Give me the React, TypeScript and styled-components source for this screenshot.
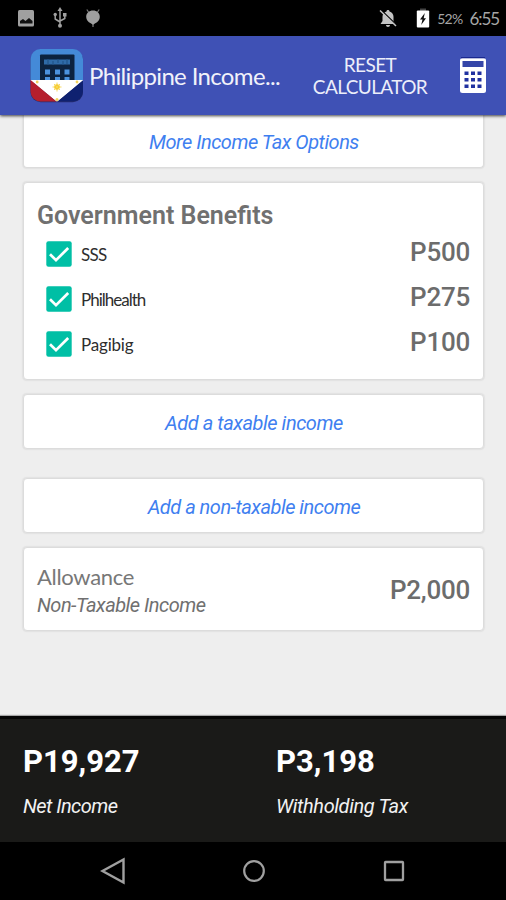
import React from "react";
import styled, { createGlobalStyle } from "styled-components";

const Global = createGlobalStyle`
  * { box-sizing: border-box; }
  html, body { margin: 0; padding: 0; }
  body { font-family: Roboto, "Noto Sans", sans-serif; background: #eeeeee; }
`;

const rounded = `Lato, "Open Sans", sans-serif`;

const Screen = styled.div`
  width: 506px;
  height: 900px;
  display: flex;
  flex-direction: column;
  overflow: hidden;
  background: #eeeeee;
`;

const StatusBar = styled.div`
  height: 36px;
  flex: none;
  background: #000;
  display: flex;
  align-items: center;
  justify-content: space-between;
  padding: 0 7px 0 17px;
  svg { display: block; }
`;

const StatusGroup = styled.div<{ $gap: number }>`
  display: flex;
  align-items: center;
  gap: ${(p) => p.$gap}px;
`;

const StatusText = styled.span<{ $size: number; $spacing: number }>`
  font-family: ${rounded};
  font-size: ${(p) => p.$size}px;
  letter-spacing: ${(p) => p.$spacing}px;
  line-height: 36px;
  color: #a6a6a6;
  padding-top: 2px;
`;

const AppBar = styled.header`
  height: 79px;
  flex: none;
  background: #3f51b5;
  box-shadow: 0 1px 3px rgba(0, 0, 0, 0.75);
  display: flex;
  align-items: center;
  padding: 0 19px 0 30px;
  z-index: 1;
  svg { display: block; flex: none; }
`;

const AppTitle = styled.h1`
  margin: 0 0 0 5px;
  width: 218px;
  font-family: ${rounded};
  font-weight: 400;
  font-size: 24px;
  letter-spacing: -0.65px;
  line-height: 30px;
  color: #f1f2fa;
  white-space: nowrap;
`;

const ResetButton = styled.button`
  width: 126px;
  margin-right: 26px;
  padding: 0;
  border: 0;
  background: none;
  font-family: ${rounded};
  font-size: 19px;
  line-height: 22px;
  letter-spacing: -0.6px;
  color: #eceefa;
  text-align: center;
`;

const Content = styled.main`
  height: 601px;
  flex: none;
  overflow: hidden;
  padding: 0 22px 0 23px;
  display: flex;
  flex-direction: column;
`;

const Card = styled.section<{ $height: number; $gap: number }>`
  height: ${(p) => p.$height}px;
  margin-bottom: ${(p) => p.$gap}px;
  flex: none;
  background: #fff;
  border: 1px solid #dcdcdc;
  box-shadow: 0 0 1px 0.5px #e2e2e2;
  border-radius: 4px;
  padding: 0 13px;
`;

const FirstCard = styled(Card)`
  border-top: 0;
  border-radius: 0 0 4px 4px;
`;

const LinkLabel = styled.a<{ $line: number; $spacing: number }>`
  display: block;
  text-align: center;
  font-style: italic;
  font-size: 20px;
  line-height: ${(p) => p.$line}px;
  letter-spacing: ${(p) => p.$spacing}px;
  padding-left: 1px;
  color: #3f7ff0;
  white-space: nowrap;
`;

const Heading = styled.h2`
  margin: 0;
  padding-top: 17px;
  font-size: 25px;
  font-weight: 600;
  line-height: 31px;
  letter-spacing: 0;
  color: #707070;
`;

const BenefitRow = styled.div`
  height: 45px;
  display: flex;
  align-items: center;
  padding-left: 9px;
`;

const BenefitName = styled.span<{ $spacing: number }>`
  flex: 1;
  padding: 1px 0 0 9px;
  font-family: ${rounded};
  font-size: 17px;
  letter-spacing: ${(p) => p.$spacing}px;
  color: #2e2e2e;
`;

const Amount = styled.span`
  font-size: 26px;
  font-weight: 500;
  line-height: 30px;
  letter-spacing: -0.25px;
  color: #6c6c6c;
  position: relative;
  top: -2px;
`;

const IncomeAmount = styled(Amount)`
  top: 1px;
`;

const IncomeRow = styled.div`
  height: 100%;
  display: flex;
  align-items: center;
  justify-content: space-between;
`;

const IncomeName = styled.div`
  padding-top: 3px;
  font-family: ${rounded};
  font-size: 22px;
  line-height: 28px;
  letter-spacing: -0.3px;
  color: #777;
`;

const IncomeKind = styled.div`
  font-style: italic;
  font-size: 20px;
  line-height: 28px;
  letter-spacing: -0.5px;
  color: #707070;
`;

const Totals = styled.footer`
  height: 126px;
  flex: none;
  background: #1a1a18;
  border-top: 3px solid #050505;
  box-shadow: 0 -1px 1px rgba(0, 0, 0, 0.3);
  padding: 25px 23px 0;
  display: grid;
  grid-template-columns: 253px 1fr;
  z-index: 1;
`;

const TotalValue = styled.div`
  font-size: 31px;
  font-weight: 700;
  line-height: 36px;
  color: #fff;
`;

const TotalLabel = styled.div<{ $spacing: number }>`
  margin-top: 13px;
  font-style: italic;
  font-size: 20px;
  line-height: 26px;
  letter-spacing: ${(p) => p.$spacing}px;
  color: #f2f2f2;
`;

const NavBar = styled.nav`
  height: 58px;
  flex: none;
  background: #000;
  display: grid;
  grid-template-columns: repeat(3, 140.5px);
  justify-content: center;
  justify-items: center;
  align-items: center;
  padding-left: 1px;
  svg { display: block; }
`;

const PictureIcon = () => (
  <svg width="18" height="18" viewBox="0 0 18 18">
    <rect x="1" y="1" width="16" height="16.5" rx="1.5" fill="#a0a0a0" />
    <path d="M3 14.500V12l3-2 2.500 2 3.500-3 3.500 3v2.500z" fill="#111" />
  </svg>
);

const UsbIcon = () => (
  <svg width="14" height="22" viewBox="0 0 14 22" fill="none" stroke="#a0a0a0" strokeWidth="1.5">
    <path d="M7 3v15M2.200 8v4L7 15M11.800 8v3.500L7 14" />
    <path d="M7 0l2.500 4h-5zM10 6h3.500v3.500H10z" fill="#a0a0a0" stroke="none" />
    <circle cx="2.200" cy="7.500" r="1.700" fill="#a0a0a0" stroke="none" />
    <circle cx="7" cy="18.700" r="2" fill="#a0a0a0" stroke="none" />
  </svg>
);

const BugIcon = () => (
  <svg width="16" height="20" viewBox="0 0 16 20">
    <path d="M3.500 4 1.800 1.500M12.500 4l1.700-2.500M8 15v4" stroke="#777" strokeWidth="1.300" />
    <path d="M1.200 9C1.200 5 4 2.500 8 2.500S14.800 5 14.800 9c0 3-2 5.200-4.500 6.200L8 16.800l-2.300-1.600C3.200 14.200 1.200 12 1.200 9z" fill="#a0a0a0" />
  </svg>
);

const BellOffIcon = () => (
  <svg width="18" height="19" viewBox="0 0 18 19">
    <path d="M9 1c.9 0 1.500.6 1.500 1.400 2.500.7 4 2.800 4 5.300V12l2 3H1.500l2-3V7.700c0-2.500 1.500-4.600 4-5.300C7.500 1.600 8.100 1 9 1zM7 16h4c0 1.300-.9 2-2 2s-2-.7-2-2z" fill="#c4c4c4" />
    <path d="M2.500 1.500 18 16.500" stroke="#000" strokeWidth="1.500" />
    <path d="M1 1.500 17 17" stroke="#c4c4c4" strokeWidth="1.500" />
  </svg>
);

const BatteryIcon = () => (
  <svg width="14" height="20" viewBox="0 0 14 20">
    <path d="M4 .5h6V3H4z" fill="#444" />
    <rect x=".8" y="2.500" width="12.400" height="17" rx="1" fill="#fff" />
    <path d="M8.800 5 4 11.500h2.500L5.200 17 10 10.200H7.700z" fill="#111" />
  </svg>
);

const AppLogo = () => (
  <svg width="54" height="55" viewBox="0 0 54 55">
    <defs>
      <clipPath id="logo-tile"><rect x=".5" y="1" width="52.500" height="52.500" rx="10" /></clipPath>
    </defs>
    <rect x=".5" y="1.800" width="52.500" height="52.500" rx="10" fill="#2a2f6e" />
    <g clipPath="url(#logo-tile)">
      <rect width="54" height="32" fill="#448ad8" />
      <rect x="10" y="6.500" width="34.500" height="27" rx="1" fill="#0c2340" />
      <rect x="14" y="11.500" width="26" height="5" fill="#2f6ba8" />
      <path d="M18 11.500v5M23 13v3.500M28 11.500V15M33 13v3.500M37 11.500V16" stroke="#24588f" strokeWidth="1.500" />
      <path d="M15 21.500h5v5h-5zM25 21.500h5v5h-5zM34.500 21.500h5v5h-5zM15 29h5v4h-5zM25 29h5v4h-5zM34.500 29h5v4h-5z" fill="#4b93df" />
      <path d="M0 32h54L27 54z" fill="#fff" />
      <path d="M0 31.500 27 54H0z" fill="#b51f2d" />
      <path d="M54 31.500 27 54h27z" fill="#0f2170" />
      <circle cx="27" cy="39" r="2.800" fill="#f5c518" />
      <path d="M27 34.500v9M22.500 39h9M24 36l6 6M30 36l-6 6" stroke="#f7d654" strokeWidth=".9" />
      <circle cx="7.200" cy="34" r="1.400" fill="#f3d35b" />
      <circle cx="47" cy="34" r="1.400" fill="#f3d35b" />
      <circle cx="27" cy="51.500" r="1.500" fill="#f3d35b" />
    </g>
  </svg>
);

const CalculatorIcon = () => (
  <svg width="28" height="37" viewBox="0 0 28 37">
    <rect x="1" y="1" width="26" height="35" rx="2.500" fill="#fff" />
    <path d="M2 .7h24" stroke="#16248c" strokeWidth="1.200" />
    <rect x="3.500" y="4" width="21" height="6" fill="#3445a8" />
    <path d="M5.500 14.500h4v3.500h-4zM12 14.500h4v3.500h-4zM18.500 14.500h4v3.500h-4zM5.500 21h4v3.500h-4zM12 21h4v3.500h-4zM18.500 21h4v3.500h-4zM5.500 27.500h4V31h-4zM12 27.500h4V31h-4zM18.500 27.500h4V31h-4z" fill="#2031a0" />
  </svg>
);

const CheckIcon = () => (
  <svg width="26" height="26" viewBox="0 0 26 26">
    <rect x=".3" y=".3" width="25.400" height="25.400" rx="2.200" fill="#00bfa5" />
    <path d="m4 13.200 6 6L22.200 7" fill="none" stroke="#fff" strokeWidth="2.700" />
  </svg>
);

const BackIcon = () => (
  <svg width="26" height="28" viewBox="0 0 26 28">
    <path d="M23.500 2.500v23L2.500 14z" fill="none" stroke="#a0a0a0" strokeWidth="2.400" />
  </svg>
);

const HomeIcon = () => (
  <svg width="24" height="24" viewBox="0 0 24 24">
    <circle cx="12" cy="12" r="9.800" fill="none" stroke="#a0a0a0" strokeWidth="2.200" />
  </svg>
);

const RecentsIcon = () => (
  <svg width="22" height="22" viewBox="0 0 22 22">
    <rect x="2" y="2" width="18" height="18" rx=".6" fill="none" stroke="#a0a0a0" strokeWidth="2.300" />
  </svg>
);

const benefits = [
  { name: "SSS", amount: "P500", spacing: -0.7 },
  { name: "Philhealth", amount: "P275", spacing: -1 },
  { name: "Pagibig", amount: "P100", spacing: -0.2 },
];

const totals = [
  { value: "P19,927", label: "Net Income", spacing: -0.55 },
  { value: "P3,198", label: "Withholding Tax", spacing: -0.4 },
];

export default function App() {
  return (
    <>
      <Global />
      <Screen>
        <StatusBar>
          <StatusGroup $gap={18}>
            <PictureIcon />
            <UsbIcon />
            <BugIcon />
          </StatusGroup>
          <StatusGroup $gap={7}>
            <StatusGroup $gap={19}>
              <BellOffIcon />
              <BatteryIcon />
            </StatusGroup>
            <StatusText $size={14} $spacing={-0.7}>52%</StatusText>
            <StatusText $size={17} $spacing={-1.1}>6:55</StatusText>
          </StatusGroup>
        </StatusBar>
        <AppBar>
          <AppLogo />
          <AppTitle>Philippine Income...</AppTitle>
          <ResetButton>RESET CALCULATOR</ResetButton>
          <CalculatorIcon />
        </AppBar>
        <Content>
          <FirstCard $height={53} $gap={14}>
            <LinkLabel $line={54} $spacing={-0.5}>More Income Tax Options</LinkLabel>
          </FirstCard>
          <Card $height={198} $gap={14}>
            <Heading>Government Benefits</Heading>
            {benefits.map((b) => (
              <BenefitRow key={b.name}>
                <CheckIcon />
                <BenefitName $spacing={b.spacing}>{b.name}</BenefitName>
                <Amount>{b.amount}</Amount>
              </BenefitRow>
            ))}
          </Card>
          <Card $height={55} $gap={29}>
            <LinkLabel $line={56} $spacing={-0.45}>Add a taxable income</LinkLabel>
          </Card>
          <Card $height={55} $gap={14}>
            <LinkLabel $line={56} $spacing={-0.5}>Add a non-taxable income</LinkLabel>
          </Card>
          <Card $height={84} $gap={0}>
            <IncomeRow>
              <div>
                <IncomeName>Allowance</IncomeName>
                <IncomeKind>Non-Taxable Income</IncomeKind>
              </div>
              <IncomeAmount>P2,000</IncomeAmount>
            </IncomeRow>
          </Card>
        </Content>
        <Totals>
          {totals.map((t) => (
            <div key={t.label}>
              <TotalValue>{t.value}</TotalValue>
              <TotalLabel $spacing={t.spacing}>{t.label}</TotalLabel>
            </div>
          ))}
        </Totals>
        <NavBar>
          <BackIcon />
          <HomeIcon />
          <RecentsIcon />
        </NavBar>
      </Screen>
    </>
  );
}
